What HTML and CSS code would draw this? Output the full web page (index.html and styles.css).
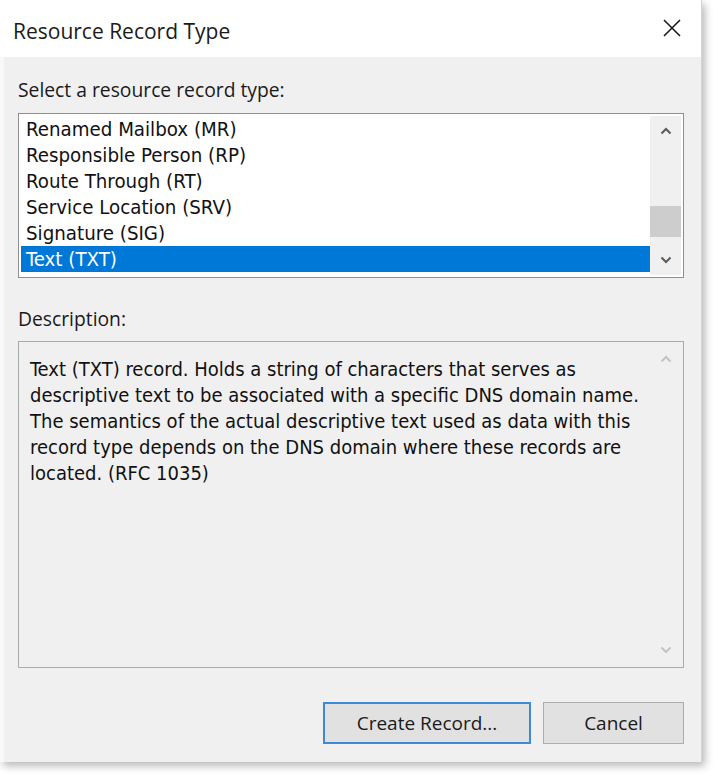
FILE: index.html
```html
<!DOCTYPE html>
<html lang="en">
<head>
<meta charset="utf-8">
<title>Resource Record Type</title>
<link rel="stylesheet" href="styles.css">
</head>
<body>
<div class="dialog">
  <div class="titlebar">
    <span class="title">Resource Record Type</span>
    <span class="close" aria-label="Close">
      <svg width="18" height="18" viewBox="0 0 18 18"><path d="M1 1 L17 17 M17 1 L1 17" stroke="#1a1a1a" stroke-width="1.6" fill="none"/></svg>
    </span>
  </div>
  <div class="body">
    <div class="label label-select">Select a resource record type:</div>
    <div class="listbox">
      <ul class="items">
        <li>Renamed Mailbox (MR)</li>
        <li>Responsible Person (RP)</li>
        <li>Route Through (RT)</li>
        <li>Service Location (SRV)</li>
        <li>Signature (SIG)</li>
        <li class="selected">Text (TXT)</li>
      </ul>
      <div class="vscroll">
        <span class="arrow"><svg width="12" height="8" viewBox="0 0 12 8"><path d="M1.5 6.5 L6 2 L10.5 6.5" stroke="#5a5a5a" stroke-width="2" fill="none"/></svg></span>
        <div class="track"><div class="thumb"></div></div>
        <span class="arrow"><svg width="12" height="8" viewBox="0 0 12 8"><path d="M1.5 1.5 L6 6 L10.5 1.5" stroke="#5a5a5a" stroke-width="2" fill="none"/></svg></span>
      </div>
    </div>
    <div class="label label-desc">Description:</div>
    <div class="descbox">
      <p class="desctext">Text (TXT) record. Holds a string of characters that serves as<br>descriptive text to be associated with a specific DNS domain name.<br>The semantics of the actual descriptive text used as data with this<br>record type depends on the DNS domain where these records are<br>located. (RFC 1035)</p>
      <div class="vscroll disabled">
        <span class="arrow"><svg width="12" height="8" viewBox="0 0 12 8"><path d="M1.5 6.5 L6 2 L10.5 6.5" stroke="#c4c4c4" stroke-width="2" fill="none"/></svg></span>
        <div class="track"></div>
        <span class="arrow"><svg width="12" height="8" viewBox="0 0 12 8"><path d="M1.5 1.5 L6 6 L10.5 1.5" stroke="#c4c4c4" stroke-width="2" fill="none"/></svg></span>
      </div>
    </div>
    <div class="buttons">
      <button class="btn btn-default">Create Record...</button>
      <button class="btn btn-cancel">Cancel</button>
    </div>
  </div>
</div>
</body>
</html>
```
FILE: styles.css
```css
* { box-sizing: border-box; }
html, body { margin: 0; padding: 0; background: #ffffff; }
body { width: 720px; height: 781px; overflow: hidden; }

.dialog {
  width: 702px;
  height: 762px;
  display: flex;
  flex-direction: column;
  background: #f0f0f0;
  border-right: 1px solid #d4d4d4;
  box-shadow: 3px 4px 8px rgba(0, 0, 0, 0.28);
}

.titlebar {
  height: 57px;
  flex: none;
  display: flex;
  align-items: center;
  justify-content: space-between;
  background: #ffffff;
  padding-left: 13px;
  padding-top: 1px;
}
.title {
  font-family: "Open Sans", "Noto Sans", sans-serif;
  font-size: 21px;
  color: #1a1a1a;
  margin-top: 3px;
}
.close {
  width: 18px;
  height: 18px;
  margin-right: 20px;
  margin-bottom: 2px;
  display: flex;
}

.body {
  flex: 1;
  display: flex;
  flex-direction: column;
  border-left: 4px solid #f8f8f8;
  padding: 20px 17px 18px 14px;
}

.label {
  font-family: "Open Sans", "Noto Sans", sans-serif;
  font-size: 19.3px;
  line-height: 26px;
  height: 26px;
  color: #1a1a1a;
}
.label-desc { margin-top: 28px; }

.listbox {
  margin-top: 10px;
  height: 165px;
  border: 1px solid #8f8f8f;
  background: #ffffff;
  padding: 2px;
  display: flex;
}
.items {
  list-style: none;
  margin: 0;
  padding: 0;
  flex: 1;
  font-family: "DejaVu Sans Condensed", "DejaVu Sans", sans-serif;
  font-stretch: condensed;
  font-size: 20.3px;
  color: #111;
}
.items li {
  height: 26px;
  line-height: 26px;
  padding-left: 5px;
  white-space: nowrap;
}
.items li.selected {
  background: #0078d7;
  color: #ffffff;
}

.vscroll {
  width: 31px;
  flex: none;
  display: flex;
  flex-direction: column;
  background: #f0f0f0;
}
.vscroll .arrow {
  height: 30px;
  flex: none;
  display: flex;
  align-items: center;
  justify-content: center;
}
.vscroll .track {
  flex: 1;
  display: flex;
  flex-direction: column;
}
.thumb {
  margin-top: 60px;
  height: 31px;
  background: #cdcdcd;
}

.descbox {
  margin-top: 9px;
  height: 327px;
  border: 1px solid #ababab;
  background: #f0f0f0;
  padding: 2px;
  display: flex;
}
.desctext {
  flex: 1;
  margin: 0;
  padding: 12px 0 0 9px;
  font-family: "DejaVu Sans Condensed", "DejaVu Sans", sans-serif;
  font-stretch: condensed;
  font-size: 20px;
  line-height: 26px;
  color: #111;
  white-space: nowrap;
}
.vscroll.disabled { background: #f0f0f0; }

.buttons {
  margin-top: 34px;
  display: flex;
  justify-content: flex-end;
  gap: 12px;
}
.btn {
  height: 42px;
  margin: 0;
  font-family: "Open Sans", "Noto Sans", sans-serif;
  font-size: 19px;
  color: #1a1a1a;
  background: #e1e1e1;
  cursor: default;
}
.btn-default {
  width: 208px;
  border: 2px solid #3d8ad6;
}
.btn-cancel {
  width: 141px;
  border: 1px solid #adadad;
}
```
